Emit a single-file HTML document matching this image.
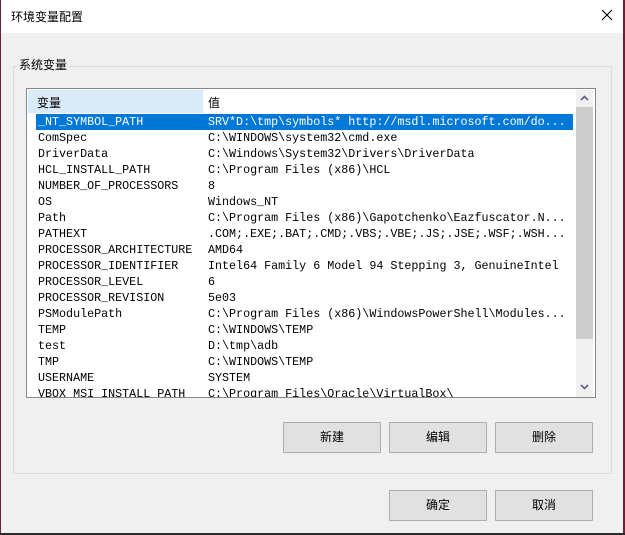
<!DOCTYPE html>
<html><head><meta charset="utf-8"><style>
*{margin:0;padding:0;box-sizing:border-box}
body{width:625px;height:535px;overflow:hidden;background:#f0f0f0;position:relative;font-family:"Liberation Sans","Noto Sans CJK SC",sans-serif;font-size:12px;color:#000}
.a{position:absolute}
.title{left:0;top:0;width:625px;height:33px;background:#fff}
.btn{position:absolute;width:98px;height:31px;background:#e1e1e1;border:1px solid #adadad;text-align:center;line-height:29px;font-size:12px}
.row{position:absolute;left:0;height:16px;line-height:16px;font-family:"Liberation Mono","Noto Sans CJK SC",monospace;font-size:11.7px;white-space:nowrap}
.row span{position:absolute}
</style></head><body>
<div class="a title"></div>
<div class="a" style="left:11px;top:8px;font-size:12px">环境变量配置</div>
<svg class="a" style="left:601px;top:9px" width="12" height="12"><path d="M1 1L11 11M11 1L1 11" stroke="#000" stroke-width="1.1"/></svg>
<div class="a" style="left:13px;top:66px;width:599px;height:408px;border:1px solid #dcdcdc"></div>
<div class="a" style="left:17px;top:56px;background:#f0f0f0;padding:0 2px;font-size:12px">系统变量</div>
<div class="a" style="left:26px;top:88px;width:570px;height:310px;border:1px solid #828790;background:#fff;overflow:hidden">
 <div class="a" style="left:1px;top:1px;width:175px;height:23px;background:#d9ebf9"></div>
 <div class="a" style="left:10px;top:5px;font-size:12px">变量</div>
 <div class="a" style="left:181px;top:5px;font-size:12px">值</div>
 <div class="a" style="left:9px;top:25px;width:537px;height:16px;background:#0078d7"></div>
 <div id="rows"></div>
 <div class="a" style="left:549px;top:1px;width:17px;height:307px;background:#f0f0f0"></div>
 <div class="a" style="left:549px;top:18px;width:17px;height:232px;background:#cdcdcd"></div>
 <svg class="a" style="left:553px;top:6px" width="9" height="6"><path d="M1 5L4.5 1.5L8 5" stroke="#606080" stroke-width="1.6" fill="none"/></svg>
 <svg class="a" style="left:553px;top:295px" width="9" height="6"><path d="M1 1L4.5 4.5L8 1" stroke="#606080" stroke-width="1.6" fill="none"/></svg>
</div>
<div class="btn" style="left:283px;top:422px">新建</div>
<div class="btn" style="left:389px;top:422px">编辑</div>
<div class="btn" style="left:495px;top:422px">删除</div>
<div class="btn" style="left:389px;top:490px">确定</div>
<div class="btn" style="left:495px;top:490px">取消</div>
<div class="a" style="left:0;top:0;width:1px;height:535px;background:#6b2038"></div>
<div class="a" style="left:623px;top:0;width:2px;height:535px;background:#6b2038"></div>
<div class="a" style="left:0;top:533px;width:625px;height:2px;background:#2a2a2a"></div>
<script>
var d=[["_NT_SYMBOL_PATH","SRV*D:\\tmp\\symbols* http://msdl.microsoft.com/do..."],["ComSpec","C:\\WINDOWS\\system32\\cmd.exe"],["DriverData","C:\\Windows\\System32\\Drivers\\DriverData"],["HCL_INSTALL_PATH","C:\\Program Files (x86)\\HCL"],["NUMBER_OF_PROCESSORS","8"],["OS","Windows_NT"],["Path","C:\\Program Files (x86)\\Gapotchenko\\Eazfuscator.N..."],["PATHEXT",".COM;.EXE;.BAT;.CMD;.VBS;.VBE;.JS;.JSE;.WSF;.WSH..."],["PROCESSOR_ARCHITECTURE","AMD64"],["PROCESSOR_IDENTIFIER","Intel64 Family 6 Model 94 Stepping 3, GenuineIntel"],["PROCESSOR_LEVEL","6"],["PROCESSOR_REVISION","5e03"],["PSModulePath","C:\\Program Files (x86)\\WindowsPowerShell\\Modules..."],["TEMP","C:\\WINDOWS\\TEMP"],["test","D:\\tmp\\adb"],["TMP","C:\\WINDOWS\\TEMP"],["USERNAME","SYSTEM"],["VBOX_MSI_INSTALL_PATH","C:\\Program Files\\Oracle\\VirtualBox\\"]];
var h="";d.forEach(function(r,i){h+='<div class="row" style="top:'+(25+i*16)+'px;'+(i==0?'color:#fff':'')+'"><span style="left:11px">'+r[0]+'</span><span style="left:181px">'+r[1]+'</span></div>';});
document.getElementById("rows").innerHTML=h;
</script>
</body></html>
